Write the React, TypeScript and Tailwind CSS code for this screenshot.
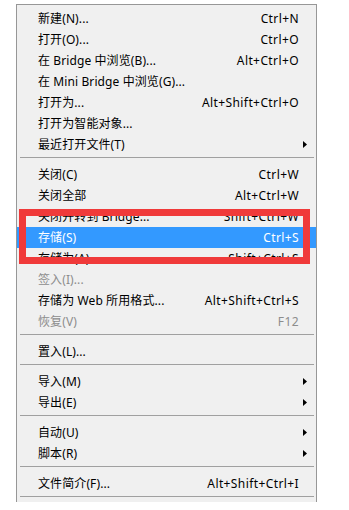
import React from "react";

type Item =
  | { type: "sep"; last?: boolean }
  | { type: "item"; label: string; shortcut?: string; sub?: boolean; disabled?: boolean; active?: boolean };

const items: Item[] = [
  { type: "item", label: "新建(N)...", shortcut: "Ctrl+N" },
  { type: "item", label: "打开(O)...", shortcut: "Ctrl+O" },
  { type: "item", label: "在 Bridge 中浏览(B)...", shortcut: "Alt+Ctrl+O" },
  { type: "item", label: "在 Mini Bridge 中浏览(G)..." },
  { type: "item", label: "打开为...", shortcut: "Alt+Shift+Ctrl+O" },
  { type: "item", label: "打开为智能对象..." },
  { type: "item", label: "最近打开文件(T)", sub: true },
  { type: "sep" },
  { type: "item", label: "关闭(C)", shortcut: "Ctrl+W" },
  { type: "item", label: "关闭全部", shortcut: "Alt+Ctrl+W" },
  { type: "item", label: "关闭并转到 Bridge...", shortcut: "Shift+Ctrl+W" },
  { type: "item", label: "存储(S)", shortcut: "Ctrl+S", active: true },
  { type: "item", label: "存储为(A)...", shortcut: "Shift+Ctrl+S" },
  { type: "item", label: "签入(I)...", disabled: true },
  { type: "item", label: "存储为 Web 所用格式...", shortcut: "Alt+Shift+Ctrl+S" },
  { type: "item", label: "恢复(V)", shortcut: "F12", disabled: true },
  { type: "sep" },
  { type: "item", label: "置入(L)..." },
  { type: "sep" },
  { type: "item", label: "导入(M)", sub: true },
  { type: "item", label: "导出(E)", sub: true },
  { type: "sep" },
  { type: "item", label: "自动(U)", sub: true },
  { type: "item", label: "脚本(R)", sub: true },
  { type: "sep" },
  { type: "item", label: "文件简介(F)...", shortcut: "Alt+Shift+Ctrl+I" },
  { type: "sep", last: true },
];

function Arrow() {
  return (
    <svg width="4" height="7" viewBox="0 0 4 7" className="block">
      <polygon points="0,0 4,3.5 0,7" fill="#000" />
    </svg>
  );
}

export default function App() {
  return (
    <div
      className="w-[349px] h-[510px] bg-white overflow-hidden relative"
      style={{ fontFamily: '"Noto Sans", "Noto Sans CJK SC", sans-serif' }}
    >
      <div className="mt-[4px] ml-[16px] w-[301px] h-[498px] bg-[#f0f0f0] border-l border-r border-t border-[#979797] pt-[3px] overflow-hidden">
        {items.map((it, i) =>
          it.type === "sep" ? (
            <div key={i} className={`${it.last ? "h-[8px]" : "h-[9px]"} pt-[2px] pl-[3px] pr-[2px]`}>
              <div className="h-px bg-[#a0a0a0]" />
            </div>
          ) : (
            <div
              key={i}
              className={`h-[21px] flex items-center pl-[21px] pr-[17px] text-[12px] leading-none ${
                it.active ? "bg-[#3399ff] text-white" : it.disabled ? "text-[#8d8d8d]" : "text-black"
              }`}
            >
              <span className="flex-1 whitespace-nowrap tracking-[0.1px]">{it.label}</span>
              {it.shortcut && <span className="whitespace-nowrap tracking-[0.4px]">{it.shortcut}</span>}
              {it.sub && (
                <span className="mr-[-8px]">
                  <Arrow />
                </span>
              )}
            </div>
          )
        )}
      </div>
      <div className="absolute left-[19px] top-[209px] w-[291px] h-[55px] border-[7px] border-[#f03a3a]" />
    </div>
  );
}
